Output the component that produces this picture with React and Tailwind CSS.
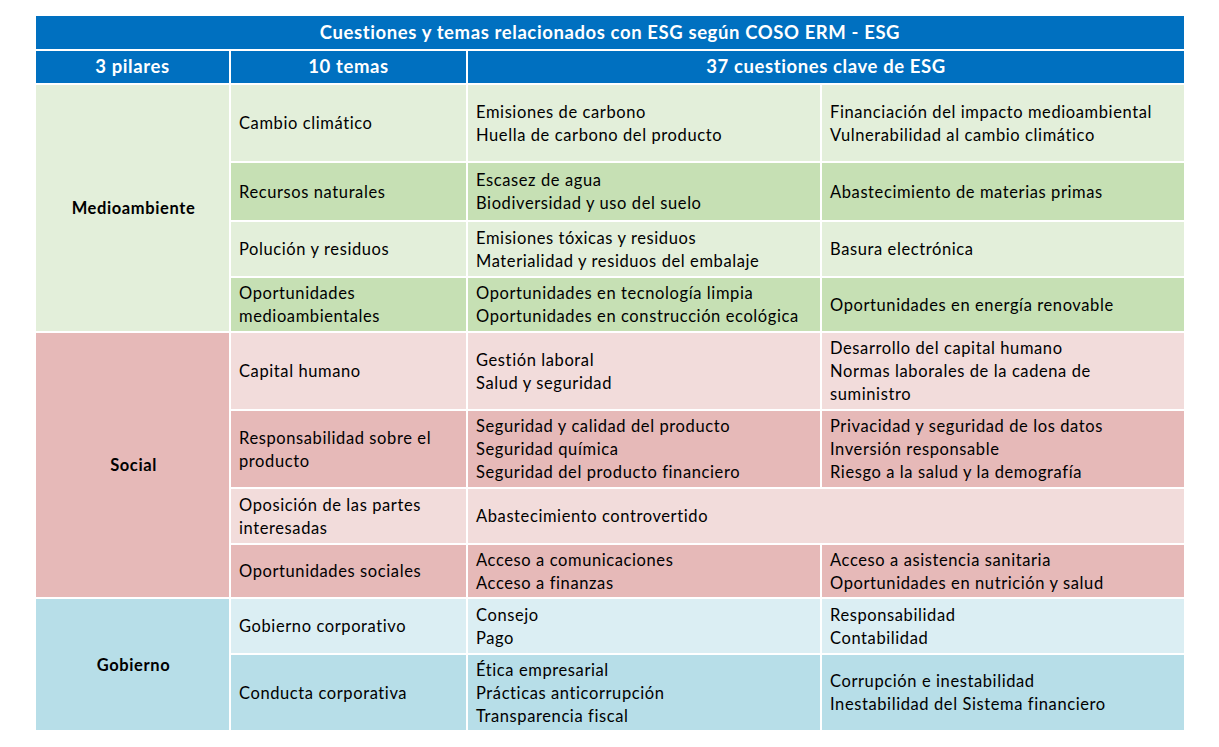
import React from "react";

const font = { fontFamily: "Lato, 'Open Sans', sans-serif" };

const Cell = ({ className = "", children }) => (
  <div className={`flex flex-col justify-center pl-[8px] pr-[6px] pt-[1px] text-[16.5px] leading-[23px] tracking-[0.6px] text-black ${className}`}>
    {children}
  </div>
);

const Lines = ({ items }) => items.map((t) => <div key={t}>{t}</div>);

const Head = ({ className = "", children }) => (
  <div className={`flex items-center justify-center bg-[#0070C0] text-white font-bold text-[18.5px] tracking-[0.6px] ${className}`}>
    {children}
  </div>
);

export default function App() {
  return (
    <div className="w-full h-[747px] bg-white pl-[36px] pt-[16px]" style={font}>
      <div className="grid w-[1148px] gap-[2px] bg-white grid-cols-[193px_235px_352px_362px] grid-rows-[33px_32px_76px_57px_54px_53px_76px_76px_54px_52px_54px_75px]">
        {/* Title */}
        <Head className="col-span-4">Cuestiones y temas relacionados con ESG según COSO ERM - ESG</Head>
        <Head>3 pilares</Head>
        <Head>10 temas</Head>
        <Head className="col-span-2">37 cuestiones clave de ESG</Head>

        {/* Medioambiente */}
        <Cell className="row-span-4 items-center font-bold bg-[#E3EFDA]">Medioambiente</Cell>
        <Cell className="bg-[#E3EFDA]">Cambio climático</Cell>
        <Cell className="bg-[#E3EFDA]"><Lines items={["Emisiones de carbono", "Huella de carbono del producto"]} /></Cell>
        <Cell className="bg-[#E3EFDA]"><Lines items={["Financiación del impacto medioambiental", "Vulnerabilidad al cambio climático"]} /></Cell>

        <Cell className="bg-[#C6E0B4]">Recursos naturales</Cell>
        <Cell className="bg-[#C6E0B4]"><Lines items={["Escasez de agua", "Biodiversidad y uso del suelo"]} /></Cell>
        <Cell className="bg-[#C6E0B4]">Abastecimiento de materias primas</Cell>

        <Cell className="bg-[#E3EFDA]">Polución y residuos</Cell>
        <Cell className="bg-[#E3EFDA]"><Lines items={["Emisiones tóxicas y residuos", "Materialidad y residuos del embalaje"]} /></Cell>
        <Cell className="bg-[#E3EFDA]">Basura electrónica</Cell>

        <Cell className="bg-[#C6E0B4]"><Lines items={["Oportunidades", "medioambientales"]} /></Cell>
        <Cell className="bg-[#C6E0B4]"><Lines items={["Oportunidades en tecnología limpia", "Oportunidades en construcción ecológica"]} /></Cell>
        <Cell className="bg-[#C6E0B4]">Oportunidades en energía renovable</Cell>

        {/* Social */}
        <Cell className="row-span-4 items-center font-bold bg-[#E6B9B8]">Social</Cell>
        <Cell className="bg-[#F2DCDB]">Capital humano</Cell>
        <Cell className="bg-[#F2DCDB]"><Lines items={["Gestión laboral", "Salud y seguridad"]} /></Cell>
        <Cell className="bg-[#F2DCDB]"><Lines items={["Desarrollo del capital humano", "Normas laborales de la cadena de", "suministro"]} /></Cell>

        <Cell className="bg-[#E6B9B8]"><Lines items={["Responsabilidad sobre el", "producto"]} /></Cell>
        <Cell className="bg-[#E6B9B8]"><Lines items={["Seguridad y calidad del producto", "Seguridad química", "Seguridad del producto financiero"]} /></Cell>
        <Cell className="bg-[#E6B9B8]"><Lines items={["Privacidad y seguridad de los datos", "Inversión responsable", "Riesgo a la salud y la demografía"]} /></Cell>

        <Cell className="bg-[#F2DCDB]"><Lines items={["Oposición de las partes", "interesadas"]} /></Cell>
        <Cell className="col-span-2 bg-[#F2DCDB]">Abastecimiento controvertido</Cell>

        <Cell className="bg-[#E6B9B8]">Oportunidades sociales</Cell>
        <Cell className="bg-[#E6B9B8]"><Lines items={["Acceso a comunicaciones", "Acceso a finanzas"]} /></Cell>
        <Cell className="bg-[#E6B9B8]"><Lines items={["Acceso a asistencia sanitaria", "Oportunidades en nutrición y salud"]} /></Cell>

        {/* Gobierno */}
        <Cell className="row-span-2 items-center font-bold bg-[#B7DEE8]">Gobierno</Cell>
        <Cell className="bg-[#DBEEF3]">Gobierno corporativo</Cell>
        <Cell className="bg-[#DBEEF3]"><Lines items={["Consejo", "Pago"]} /></Cell>
        <Cell className="bg-[#DBEEF3]"><Lines items={["Responsabilidad", "Contabilidad"]} /></Cell>

        <Cell className="bg-[#B7DEE8]">Conducta corporativa</Cell>
        <Cell className="bg-[#B7DEE8]"><Lines items={["Ética empresarial", "Prácticas anticorrupción", "Transparencia fiscal"]} /></Cell>
        <Cell className="bg-[#B7DEE8]"><Lines items={["Corrupción e inestabilidad", "Inestabilidad del Sistema financiero"]} /></Cell>
      </div>
    </div>
  );
}
